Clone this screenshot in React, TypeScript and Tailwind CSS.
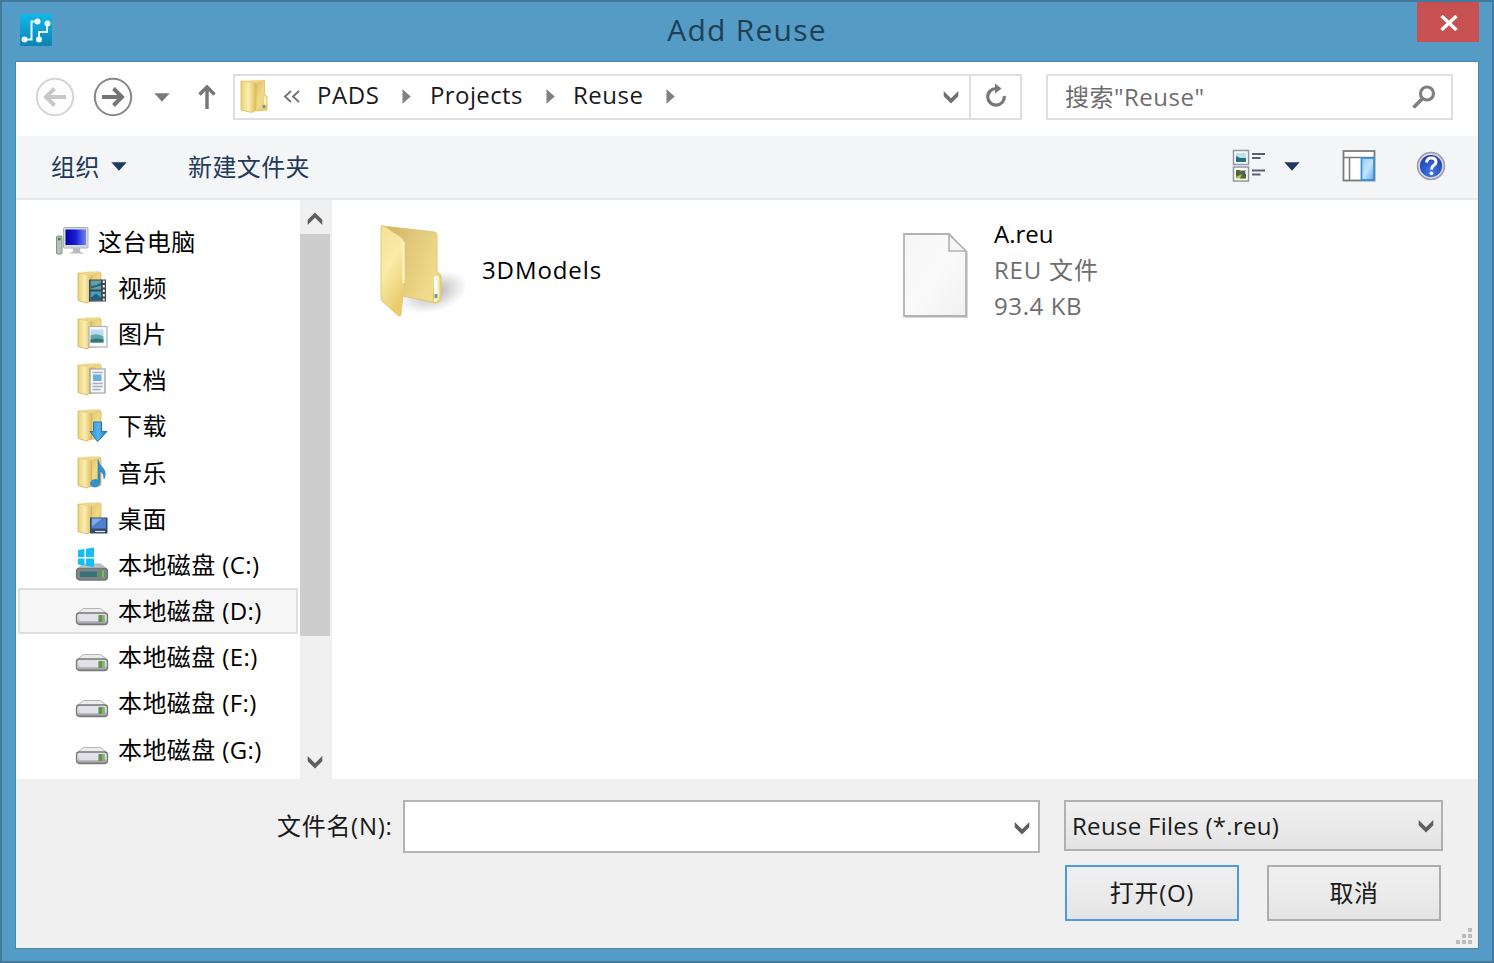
import React from 'react';

type Kind = 'video' | 'pictures' | 'documents' | 'downloads' | 'music' | 'desktop' | 'system' | 'drive';

const tree: { label: string; kind: Kind; selected?: boolean }[] = [
    { label: '视频', kind: 'video' },
    { label: '图片', kind: 'pictures' },
    { label: '文档', kind: 'documents' },
    { label: '下载', kind: 'downloads' },
    { label: '音乐', kind: 'music' },
    { label: '桌面', kind: 'desktop' },
    { label: '本地磁盘 (C:)', kind: 'system' },
    { label: '本地磁盘 (D:)', kind: 'drive', selected: true },
    { label: '本地磁盘 (E:)', kind: 'drive' },
    { label: '本地磁盘 (F:)', kind: 'drive' },
    { label: '本地磁盘 (G:)', kind: 'drive' },
];

// Gradients shared by all the icons
const Gradients = () => (
    <svg className="absolute w-0 h-0" aria-hidden="true">
        <defs>
            <linearGradient id="folderFront" x1="0" y1="0" x2="1" y2="0">
                <stop offset="0" stopColor="#ecd27c" />
                <stop offset="0.5" stopColor="#faedb0" />
                <stop offset="1" stopColor="#dfbd5c" />
            </linearGradient>
            <linearGradient id="folderBack" x1="0" y1="0" x2="1" y2="1">
                <stop offset="0" stopColor="#d9b95c" />
                <stop offset="0.55" stopColor="#f0da8a" />
                <stop offset="1" stopColor="#e8c658" />
            </linearGradient>
            <linearGradient id="bigFront" x1="0" y1="0" x2="0.4" y2="1">
                <stop offset="0" stopColor="#f3e09a" />
                <stop offset="0.5" stopColor="#faeba8" />
                <stop offset="1" stopColor="#e9cd6d" />
            </linearGradient>
            <linearGradient id="bigBack" x1="0" y1="0" x2="1" y2="0.5">
                <stop offset="0" stopColor="#cdb062" />
                <stop offset="0.45" stopColor="#e0c679" />
                <stop offset="1" stopColor="#f1dc8e" />
            </linearGradient>
            <radialGradient id="folderShade">
                <stop offset="0" stopColor="#777" stopOpacity="0.65" />
                <stop offset="1" stopColor="#999" stopOpacity="0" />
            </radialGradient>
            <linearGradient id="page" x1="0" y1="0" x2="1" y2="1">
                <stop offset="0" stopColor="#f6f6f6" />
                <stop offset="0.5" stopColor="#fafafa" />
                <stop offset="1" stopColor="#f1f1f1" />
            </linearGradient>
            <linearGradient id="metal" x1="0" y1="0" x2="0" y2="1">
                <stop offset="0" stopColor="#e4e4ea" />
                <stop offset="0.6" stopColor="#d2d2dc" />
                <stop offset="1" stopColor="#8c8c8c" />
            </linearGradient>
            <linearGradient id="screen" x1="0" y1="0" x2="1" y2="0">
                <stop offset="0" stopColor="#0505a0" />
                <stop offset="0.5" stopColor="#1c1cd8" />
                <stop offset="1" stopColor="#6f86ee" />
            </linearGradient>
            <linearGradient id="sky" x1="0" y1="0" x2="0" y2="1">
                <stop offset="0" stopColor="#12b7ea" />
                <stop offset="1" stopColor="#0b83b3" />
            </linearGradient>
            <linearGradient id="pane" x1="0" y1="0" x2="1" y2="1">
                <stop offset="0" stopColor="#8fcbfa" />
                <stop offset="0.5" stopColor="#c4e4fd" />
                <stop offset="1" stopColor="#5eaef2" />
            </linearGradient>
            <radialGradient id="help" cx="0.5" cy="0.7" r="0.7">
                <stop offset="0" stopColor="#3c7be8" />
                <stop offset="1" stopColor="#1c2fa4" />
            </radialGradient>
            <linearGradient id="arrowBlue" x1="0" y1="0" x2="1" y2="0">
                <stop offset="0" stopColor="#2f8fd6" />
                <stop offset="0.5" stopColor="#55b4f0" />
                <stop offset="1" stopColor="#1c74b8" />
            </linearGradient>
        </defs>
    </svg>
);

const Chevron: React.FC<{ up?: boolean; color?: string }> = ({ up, color = '#5f5f5f' }) => (
    <svg width="16" height="13" viewBox="0 0 16 13" className={up ? 'rotate-180' : ''}>
        <path d="M.7 0v5.200L8 12.500l7.300-7.300V0L8 7.300z" fill={color} />
    </svg>
);

const Triangle: React.FC<{ color: string }> = ({ color }) => (
    <svg width="16" height="9" viewBox="0 0 16 9">
        <path d="M.3.300h15.400L8 8.800z" fill={color} />
    </svg>
);

const Crumb: React.FC<{ className?: string }> = ({ className = '' }) => (
    <svg width="9" height="15" viewBox="0 0 9 15" className={className}>
        <path d="M.5.300v14.400L8.800 7.500z" fill="#808080" />
    </svg>
);

const AppLogo = () => (
    <svg width="34" height="34" viewBox="0 0 34 34">
        <rect x="1" y="1" width="32" height="32" rx="1.500" fill="url(#sky)" />
        <g fill="none" stroke="#e8fbff" strokeWidth="2">
            <path d="M6 26.500h6.500V8.500H19M20 26.500V19h8V11" />
        </g>
        <g fill="#e8fbff">
            <circle cx="5.500" cy="26.500" r="3" />
            <circle cx="18.500" cy="8.500" r="3" />
            <circle cx="20" cy="26.500" r="3" />
            <circle cx="28.500" cy="10.500" r="3" />
        </g>
    </svg>
);

const CircleArrow: React.FC<{ color: string; ring: string; flip?: boolean }> = ({ color, ring, flip }) => (
    <svg width="40" height="40" viewBox="0 0 40 40" className={flip ? '-scale-x-100' : ''}>
        <circle cx="20" cy="20" r="18.200" fill="#fdfdfd" stroke={ring} strokeWidth="2" />
        <path d="M9 20h19M20.500 11.500L29 20l-8.500 8.500" fill="none" stroke={color} strokeWidth="3.900" />
    </svg>
);

const SmallFolder = () => (
    <>
        <path d="M13 3L24 2.500q2 0 2 2V31l-14 1z" fill="url(#folderBack)" stroke="#d2b365" strokeWidth=".800" />
        <path d="M3 3.500L15 5q1.500.5 1.500 2v24L12 33.500 3 31z" fill="url(#folderFront)" stroke="#d0ae58" strokeWidth=".800" />
        <path d="M3 3.500L13 2l12 .5-9 3.500z" fill="#ecd68c" />
    </>
);

const Drive: React.FC<{ dark?: boolean }> = ({ dark }) => (
    <g>
        <path d="M8.500 17.500h17L32.500 23H1.500z" fill={dark ? '#b9c4c8' : '#ececec'} stroke="#a5a5a5" strokeWidth=".800" />
        <rect x="1.500" y="22" width="31" height="11.500" rx="3" fill={dark ? '#75868c' : 'url(#metal)'} stroke="#777" strokeWidth="1.300" />
        {dark && <rect x="5" y="25" width="17" height="5.500" fill="#397177" />}
        {!dark && <path d="M4 24h19v6H5z" fill="#e2e2ec" />}
        <rect x="23.500" y="24" width="6" height="7" fill="#61964f" />
        <path d="M28 24v7" stroke="#9cc982" strokeWidth="1.200" />
    </g>
);

const TreeIcon: React.FC<{ kind: Kind }> = ({ kind }) => {
    if (kind === 'drive') {
        return <svg width="34" height="36" viewBox="0 2 34 36"><Drive /></svg>;
    }
    if (kind === 'system') {
        return (
            <svg width="34" height="36" viewBox="0 0.500 34 36">
                <Drive dark />
                <path d="M3 3.500l6.500-1v8H3zM11 2.200L19 1v9.500h-8zM3 12h6.500v7L3 18zM11 12h8v8.500l-8-1.300z" fill="#14bdf2" />
            </svg>
        );
    }
    return (
        <svg width="34" height="36" viewBox="0 0.500 34 36">
            <SmallFolder />
            {kind === 'video' && (
                <g>
                    <rect x="14" y="10" width="17" height="22" fill="#3d4748" />
                    <rect x="15.500" y="11" width="10.500" height="9" fill="#5f9fae" />
                    <rect x="15.500" y="22" width="10.500" height="9" fill="#4b9cc4" />
                    <path d="M16 16q5 1 10-3v3l-10 3z" fill="#2a6270" />
                    <path d="M16 28l5-4 5 4v3H16z" fill="#245f80" />
                    <path d="M28.800 11v20" stroke="#eee" strokeWidth="2" strokeDasharray="2.500 2" />
                </g>
            )}
            {kind === 'pictures' && (
                <g>
                    <rect x="14" y="11" width="18" height="20.500" fill="#fafcfe" stroke="#a9b2ba" strokeWidth="1.200" />
                    <rect x="15.500" y="14" width="13" height="7" fill="#b9dcf0" />
                    <path d="M15.500 20q6-3 13 1v6h-13z" fill="#67a7a2" />
                    <path d="M15.500 24q6-2 13 0v3h-13z" fill="#317884" />
                </g>
            )}
            {kind === 'documents' && (
                <g>
                    <path d="M15 7.500h15v24H15z" fill="#f4f7fa" stroke="#939aa1" strokeWidth="1.200" />
                    <path d="M17.500 11h10M17.500 22h10M17.500 25h10M17.500 28h8" stroke="#a6afb8" strokeWidth="1.400" />
                    <rect x="18" y="13" width="8.500" height="6.500" fill="#6eacd9" />
                </g>
            )}
            {kind === 'downloads' && (
                <path d="M18.500 14.500h8V24h5.500L22.500 34 15 24h3.500z" fill="url(#arrowBlue)" stroke="#2779b4" strokeWidth="1" />
            )}
            {kind === 'music' && (
                <path d="M23 5q1 5 5 8.500 4 5 1 11 0-6-4-8v11q0 5-5 5-4.500 0-4.500-3.500T20.500 25l2.500.500z" fill="#3391ce" stroke="#2779ac" strokeWidth=".600" />
            )}
            {kind === 'desktop' && (
                <g>
                    <rect x="15" y="17" width="17.500" height="16" fill="#354968" />
                    <rect x="16.500" y="18" width="14.500" height="10" fill="#507ed0" />
                    <path d="M17 18h10L17 26z" fill="#80aae8" />
                    <path d="M20 31h10" stroke="#e4e8f0" strokeWidth="1.200" />
                </g>
            )}
        </svg>
    );
};

const ComputerIcon = () => (
    <svg width="34" height="30" viewBox="0 0 34 30" className="-mt-0.5">
        <rect x="1.500" y="10" width="5.500" height="18" rx="1" fill="#b7c3b7" stroke="#84908a" />
        <path d="M3 13h2.500" stroke="#258c36" strokeWidth="2.500" />
        <rect x="8.500" y="1.500" width="24.500" height="20.500" rx="1" fill="#d5dae2" stroke="#aab1bb" />
        <rect x="10.500" y="3.500" width="20.500" height="15.500" fill="url(#screen)" />
        <path d="M18 22h7v3.500l4.500 2H14l4-2z" fill="#b8bcc4" />
    </svg>
);

const AddressBar = () => (
    <div className="flex w-[789px] h-[46px] border-2 border-[#dedede] bg-white">
        <div className="flex items-center w-[736px] border-r-2 border-[#dedede]">
            <svg width="28" height="34" viewBox="0 0 28 34" className="ml-[5px] -mt-[3px]">
                <path d="M13 2.500L24.500 1.500V14l2.500 4v13l-14 1z" fill="url(#folderBack)" stroke="#e0bd56" strokeWidth=".800" />
                <path d="M24 17q3 1 2.500 6l-2 6z" fill="#fff3c0" />
                <path d="M1 2l13 1.500q2 .5 2 3V30l-4 3.500L1 31z" fill="url(#folderFront)" stroke="#dcb94f" strokeWidth=".800" />
                <path d="M1 2l11-.8 12.500.3L16 4z" fill="#efd780" />
                <path d="M24 26v3" stroke="#5b9aa0" strokeWidth="2.500" />
            </svg>
            <svg width="18" height="13" viewBox="0 0 18 13" className="ml-[15px] -mt-0.5">
                <path d="M8 1L2 6.500 8 12M16 1l-6 5.500L16 12" fill="none" stroke="#737373" strokeWidth="1.900" />
            </svg>
            <span className="w-[66px] ml-4 -mt-[5px] tracking-[0.6px]">PADS</span>
            <Crumb className="ml-[19px] -mt-0.5" />
            <span className="w-[95px] ml-[19px] -mt-[5px] tracking-[0.4px]">Projects</span>
            <Crumb className="ml-[21px] -mt-0.5" />
            <span className="w-[73px] ml-[18px] -mt-[5px] tracking-[0.5px]">Reuse</span>
            <Crumb className="ml-[20px] -mt-0.5" />
            <div className="ml-auto mr-2.5"><Chevron color="#707070" /></div>
        </div>
        <div className="flex-1 flex items-center justify-center pb-0.5">
            <svg width="24" height="26" viewBox="0 0 24 26">
                <path d="M12.500 5.500A8.300 8.300 0 1 0 20.300 13" fill="none" stroke="#777" strokeWidth="3.200" />
                <path d="M11 .5l6.500 5L11 10.500z" fill="#777" />
            </svg>
        </div>
    </div>
);

const App: React.FC = () => {
    return (
        <div className="w-[1494px] h-[963px] overflow-hidden flex flex-col bg-[#549bc6] border-2 border-[#43799d] text-2xl leading-[30px] text-[#1a1a1a] whitespace-nowrap tracking-[0.4px] font-['Open_Sans','Noto_Sans_CJK_SC',sans-serif]">
            <Gradients />
            <header className="h-[59px] shrink-0 flex items-start">
                <div className="w-[60px] pl-[17px] pt-[11px]"><AppLogo /></div>
                <h1 className="flex-1 text-center pl-[15px] pt-2 text-[30px] leading-10 tracking-[1.25px] text-[#1f4053]">Add Reuse</h1>
                <button className="w-[62px] h-10 mr-[13px] bg-[#c75050] flex items-center justify-center pl-0.5 pt-px">
                    <svg width="18" height="16" viewBox="0 0 18 16">
                        <path d="M1.500 1l15 14M16.500 1l-15 14" stroke="#fff" strokeWidth="3.400" />
                    </svg>
                </button>
            </header>

            <main className="w-[1464px] h-[888px] ml-[13px] shrink-0 border border-[#4a86ac] bg-white flex flex-col">
                <nav className="h-[74px] shrink-0 flex items-center pl-[19px] pb-1">
                    <CircleArrow color="#c8c8c8" ring="#d4d4d4" flip />
                    <div className="ml-[18px]"><CircleArrow color="#747474" ring="#888" /></div>
                    <div className="ml-[21px]"><Triangle color="#7b7b7b" /></div>
                    <svg width="18" height="26" viewBox="0 0 18 26" className="ml-7 mr-[17px]">
                        <path d="M9 25V3M1.500 10.500L9 3l7.500 7.500" fill="none" stroke="#777" strokeWidth="3.400" />
                    </svg>
                    <AddressBar />
                    <div className="w-[407px] h-[46px] ml-6 border-2 border-[#dedede] flex items-center pl-[17px] pr-[15px] text-[#6d6d6d]">
                        <span className="tracking-[0.5px] -mt-px">搜索"Reuse"</span>
                        <svg width="24" height="24" viewBox="0 0 24 24" className="ml-auto">
                            <circle cx="15" cy="8.500" r="6.500" fill="none" stroke="#808080" strokeWidth="3.200" />
                            <path d="M10.500 13.500L1.500 22.500" stroke="#808080" strokeWidth="3.800" />
                        </svg>
                    </div>
                </nav>

                <div className="h-[64px] shrink-0 flex items-center pl-[35px] pr-8 bg-[#f4f5f7] border-b-2 border-[#e6e8ec] text-[#1e395b]">
                    <span className="w-[50px]">组织</span>
                    <div className="ml-2.5 -mt-0.5"><Triangle color="#1e395b" /></div>
                    <span className="ml-[61px]">新建文件夹</span>
                    <svg width="34" height="34" viewBox="0 0 34 34" className="ml-auto -mt-0.5">
                        <g fill="#fff" stroke="#9097a3" strokeWidth="1.500">
                            <rect x="1.500" y="1.500" width="15" height="14" />
                            <rect x="1.500" y="18" width="15" height="14" />
                        </g>
                        <rect x="4" y="4" width="10" height="8.500" fill="#bce0ec" />
                        <path d="M4 7l4 2h6v4H4z" fill="#276d7b" />
                        <rect x="4" y="21" width="10" height="8.500" fill="#bac64c" />
                        <path d="M4 21h4l2 4-6 3zM10 25h4v4.500H8z" fill="#4c6c34" />
                        <path d="M9 22h4v3H9z" fill="#594cb8" />
                        <path d="M20 5h13M20 9h8.500M20 21.500h13M20 25.500h8.500" stroke="#566070" strokeWidth="1.800" />
                    </svg>
                    <div className="ml-[18px] -mt-0.5"><Triangle color="#1e395b" /></div>
                    <svg width="34" height="32" viewBox="0 0 34 32" className="ml-[42px] -mt-0.5">
                        <rect x="1.500" y="1" width="31" height="29.500" fill="#fff" stroke="#7b7b7b" strokeWidth="1.800" />
                        <path d="M1.500 7.500h31M7.500 7.500v23" stroke="#7b7b7b" strokeWidth="1.500" />
                        <rect x="19.500" y="8" width="12.500" height="22" fill="url(#pane)" stroke="#3d8fd4" strokeWidth="1.800" />
                    </svg>
                    <svg width="30" height="30" viewBox="0 0 30 30" className="ml-10 -mt-0.5">
                        <circle cx="15" cy="15" r="13.500" fill="url(#help)" stroke="#9b9ca4" strokeWidth="1.500" />
                        <circle cx="15" cy="15" r="12" fill="none" stroke="#d3d5de" strokeWidth="1.800" />
                        <path d="M10.500 11.500q.5-4.500 5-4.500t4.500 4q0 2-2.500 3.600Q15.500 16 15.500 18.500" fill="none" stroke="#fff" strokeWidth="3" />
                        <circle cx="15.400" cy="22.300" r="1.900" fill="#fff" />
                    </svg>
                </div>

                <div className="h-[579px] shrink-0 flex">
                    <aside className="w-[284px] pt-[18.500px] pl-0.5 pr-0.5 text-black">
                        <div className="h-[46.2px] flex items-center pl-[37px]">
                            <ComputerIcon />
                            <span className="ml-[9px]">这台电脑</span>
                        </div>
                        {tree.map((item) => (
                            <div
                                key={item.label}
                                className={`h-[46.2px] flex items-center pl-[55px] border-2 ${item.selected ? 'bg-[#f6f6f6] border-[#dedede]' : 'border-transparent'}`}
                            >
                                <TreeIcon kind={item.kind} />
                                <span className="ml-[9px]">{item.label}</span>
                            </div>
                        ))}
                    </aside>
                    <div className="w-8 bg-[#f0f0f0] flex flex-col items-center">
                        <div className="h-[34px] flex items-center pt-0.5 pr-0.5"><Chevron up /></div>
                        <div className="w-[30px] h-[402px] mr-0.5 bg-[#cdcdcd]" />
                        <div className="mt-auto h-[34px] flex items-center pr-0.5"><Chevron /></div>
                    </div>
                    <section className="flex-1 flex items-start pt-[16px]">
                        <div className="w-[522px] flex items-center pl-[45px] text-black">
                            <svg width="88" height="108" viewBox="0 0 88 108">
                                <ellipse cx="56" cy="76" rx="36" ry="20" fill="url(#folderShade)" transform="rotate(-16 56 76)" />
                                <path d="M6 10L57 16q3 .5 3 3v37l3 2q1.500 2 1 6v19q-1 3-5 4L26 80z" fill="url(#bigBack)" stroke="#dfc675" />
                                <path d="M58 60q3-3 5 1v20l-3 6-4-1z" fill="#f9efbd" stroke="#e1c660" />
                                <path d="M58.500 60v18" stroke="#fff" strokeWidth="3" />
                                <path d="M59 78v4" stroke="#6b9aa6" strokeWidth="3" />
                                <path d="M4 11q0-2.500 3-1l18 12q2 1.500 2 4v42l-3 31q0 2-3 .5L6 86q-2-1.500-2-4z" fill="url(#bigFront)" stroke="#e3cb7c" />
                                <path d="M26.500 26v41" stroke="#fff7d2" strokeWidth="2" />
                            </svg>
                            <span className="ml-[17px] tracking-[0.9px]">3DModels</span>
                        </div>
                        <div className="flex items-center pl-[47px]">
                            <svg width="72" height="90" viewBox="0 0 72 90" className="mt-3">
                                <path d="M4 5h46l17 17v65H4z" fill="#bdbdbd" opacity=".600" />
                                <path d="M3 3h45l17 18v64H3z" fill="url(#page)" stroke="#b3b3b3" strokeWidth="1.800" />
                                <path d="M48 3.500V20h17z" fill="#f5f5f5" stroke="#b3b3b3" strokeWidth="1.600" />
                            </svg>
                            <div className="ml-[21px] leading-9 text-[#6d6d6d]">
                                <p className="text-black tracking-normal">A.reu</p>
                                <p className="tracking-[0.8px]">REU 文件</p>
                                <p className="tracking-[0.6px]">93.4 KB</p>
                            </div>
                        </div>
                    </section>
                </div>

                <footer className="flex-1 relative bg-[#f0f0f0] pt-[21px]">
                    <div className="flex items-start">
                        <label className="ml-[261px] w-[126px] leading-[52px] tracking-[0.7px]">文件名(N):</label>
                        <div className="w-[637px] h-[53px] bg-white border-2 border-[#b4b4b4] flex items-center justify-end pr-2 pt-1"><Chevron /></div>
                        <div className="ml-6 w-[379px] h-[51px] border-2 border-[#b0b0b0] bg-linear-to-b from-[#f0f0f0] to-[#e4e4e4] flex items-center justify-between pl-1.5 pr-[7px]">
                            <span className="tracking-[0.3px]">Reuse Files (*.reu)</span>
                            <div className="mt-px"><Chevron /></div>
                        </div>
                    </div>
                    <div className="flex justify-end gap-7 pr-[37px] mt-3">
                        <button className="w-[174px] h-[56px] border-2 border-[#4f9ae8] bg-linear-to-b from-[#f0f0f0] to-[#e5e5e5] tracking-[0.7px]">打开(O)</button>
                        <button className="w-[174px] h-[56px] border-2 border-[#adadad] bg-linear-to-b from-[#f0f0f0] to-[#e5e5e5]">取消</button>
                    </div>
                    <svg width="18" height="18" viewBox="0 0 18 18" className="absolute right-[5px] bottom-[3px]" fill="#bdbdbd">
                        <path d="M13 1h4v4h-4zM7 7h4v4H7zM13 7h4v4h-4zM1 13h4v4H1zM7 13h4v4H7zM13 13h4v4h-4z" />
                    </svg>
                </footer>
            </main>
        </div>
    );
};

export default App;
